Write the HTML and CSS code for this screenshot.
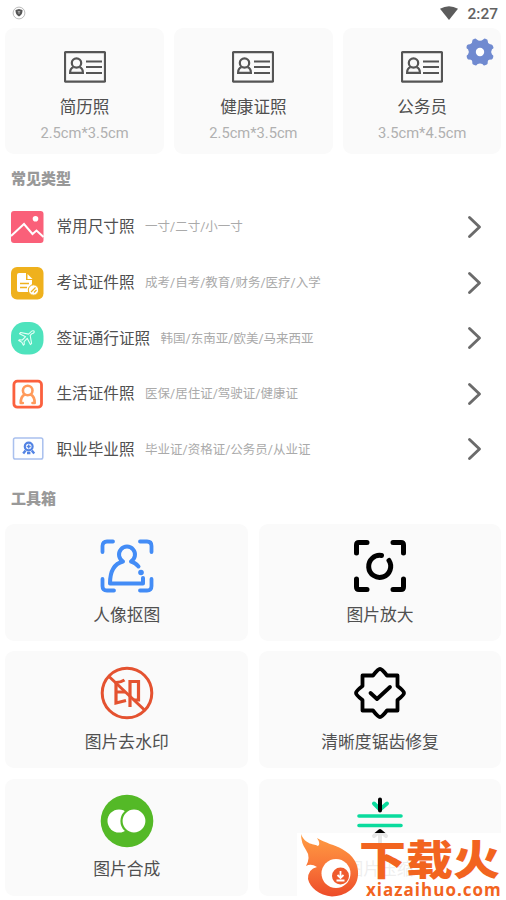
FILE: index.html
```
<!DOCTYPE html>
<html lang="zh-CN">
<head>
<meta charset="utf-8">
<title>证件照</title>
<link rel="stylesheet" href="styles.css">
</head>
<body>
<svg class="defs" width="0" height="0" aria-hidden="true">
  <symbol id="idcard" viewBox="0 0 42 32">
    <g fill="none" stroke="#555" stroke-width="2.200">
      <rect x="1" y="1.200" width="40" height="29.500" rx=".8"/>
      <circle cx="12.500" cy="12" r="4.700"/>
      <path d="M9.500 16.200c-2.600.6-3.400 2.800-3.400 5.600h12.800c0-2.800-.8-5-3.400-5.600"/>
      <path d="M22 10.500h16M22 16h16M22 22h16"/>
    </g>
  </symbol>
  <symbol id="chevron" viewBox="0 0 16 24">
    <path d="M2.500 2.500l10 9.500-10 9.500" fill="none" stroke="#6b6b6b" stroke-width="2.900" stroke-linecap="round" stroke-linejoin="round"/>
  </symbol>
</svg>
<div class="screen">
  <header class="status">
    <svg width="14" height="14" viewBox="0 0 14 14"><circle cx="7" cy="7" r="5.900" fill="#fff" stroke="#aaa" stroke-width=".8"/><path d="M7 3l3.500 1c0 3.400-.8 5-3.500 6.600C4.300 9 3.500 7.400 3.500 4z" fill="#555"/><path d="M7 5v3M5.700 5.700h2.600" stroke="#bbb" stroke-width=".8"/></svg>
    <div class="status-right">
      <svg width="18" height="14" viewBox="0 0 18 14"><path d="M0 2.700Q9-2.300 18 2.700L9 14z" fill="#5c5c5c"/></svg>
      <span class="clock">2:27</span>
    </div>
  </header>

  <main>
    <section class="sizes">
      <div class="card size"><svg width="42" height="32"><use href="#idcard"/></svg><b>简历照</b><small>2.5cm*3.5cm</small></div>
      <div class="card size"><svg width="42" height="32"><use href="#idcard"/></svg><b>健康证照</b><small>2.5cm*3.5cm</small></div>
      <div class="card size"><svg width="42" height="32"><use href="#idcard"/></svg><b>公务员</b><small>3.5cm*4.5cm</small>
        <svg class="gear" width="28" height="28" viewBox="-14 -14 28 28"><path fill="#708ad0" d="M-3.500-12.800Q-4.500-13.900-6-13Q-8-12.400-7.700-11Q-7.500-8.500-10-7.700Q-13.500-8-13.500-4.500Q-13.700-3.500-12-2.700Q-10.300 0-12 2.500Q-13.800 3.200-13.300 5Q-12.700 8-10.500 7.600Q-7.500 7.600-7.700 10.800Q-8 12.500-5 13.300Q-3.500 13.800-2.700 12.200Q0 10.600 2.700 12.200Q3.500 13.800 5 13.300Q8 12.500 7.700 10.800Q7.500 7.600 10.500 7.600Q12.700 8 13.300 5Q13.800 3.200 12 2.500Q10.300 0 12-2.700Q13.700-3.500 13.500-4.500Q12.500-8 10-7.700Q7.500-8.500 7.700-11Q8-12.400 6-13Q4.500-13.900 3.500-12.800Q0-9.600-3.500-12.800z"/><circle r="4.200" fill="#fff"/></svg>
      </div>
    </section>

    <h2 class="heading">常见类型</h2>
    <ul class="types">
      <li><svg width="34" height="34" viewBox="0 0 34 34"><rect x="1" y="1" width="32.500" height="32" rx="3" fill="#fa6079"/><circle cx="25.500" cy="8.700" r="2.800" fill="#fff"/><path d="M1 26L14 14l8.500 10 4-3.500L33.500 27" fill="none" stroke="#fff" stroke-width="2"/></svg><span>常用尺寸照</span><small>一寸/二寸/小一寸</small><svg class="go" width="16" height="24"><use href="#chevron"/></svg></li>
      <li><svg width="34" height="34" viewBox="0 0 34 34"><rect x="1" y="1" width="32.500" height="32.500" rx="6" fill="#efb11d"/><path d="M9 7h7v7h6v4l-4 8H9q-2 0-2-2V9q0-2 2-2z" fill="#fff"/><path d="M17.500 8l5 5h-5z" fill="#fff"/><path d="M10 17.500h9M10 21.500h7" stroke="#efb11d" stroke-width="1.500"/><circle cx="23.500" cy="24" r="5.200" fill="#fff" stroke="#efb11d" stroke-width="1"/><path d="M21 26l4.500-4.500M24 26.500l2.500-2.500" stroke="#efb11d" stroke-width="1.200"/></svg><span>考试证件照</span><small>成考/自考/教育/财务/医疗/入学</small><svg class="go" width="16" height="24"><use href="#chevron"/></svg></li>
      <li><svg width="34" height="34" viewBox="0 0 34 34"><rect x="1" y="1" width="32.500" height="32.500" rx="14" fill="#4ee3bd"/><path d="M24 10q-2-.8-3.500 1.300l-2 1.800-7.700-1.600-1.300 1.200 6.100 3-3.300 3.300-2.800-.3-.8.800 3.100 1.700 1.600 3 .9-.8-.2-2.800 3.200-3.200 3.100 6.200 1.200-1.300-1.400-7.800 1.700-1.800Q25 12 24 10z" fill="#4ee3bd" stroke="#e4fff5" stroke-width="1.100" stroke-linejoin="round"/></svg><span>签证通行证照</span><small>韩国/东南亚/欧美/马来西亚</small><svg class="go" width="16" height="24"><use href="#chevron"/></svg></li>
      <li><svg width="34" height="34" viewBox="0 0 34 34"><rect x="3.900" y="4.200" width="27.600" height="26" rx="3.500" fill="#fff" stroke="#fb603e" stroke-width="2.800"/><g fill="none" stroke="#ff9a5b" stroke-width="2.600" stroke-linecap="round"><circle cx="17.700" cy="13.500" r="4.800"/><path d="M14.700 17.500q-4 2-4 8.500M20.700 17.500q4 2 4 8.500M11.200 26h1.600M22.500 26h1.600"/></g></svg><span>生活证件照</span><small>医保/居住证/驾驶证/健康证</small><svg class="go" width="16" height="24"><use href="#chevron"/></svg></li>
      <li><svg width="34" height="34" viewBox="0 0 34 34"><rect x="3.500" y="6" width="29.300" height="21" rx="1.800" fill="#fdfeff" stroke="#a9c0ee" stroke-width="1.500"/><circle cx="18.700" cy="14.500" r="3.900" fill="none" stroke="#5283e4" stroke-width="2.200"/><path d="M18.700 12.500v4M16.700 14.500h4" stroke="#5283e4" stroke-width="1.500"/><path d="M15.600 18.500l-2.400 3M21.800 18.500l2.400 3M17 21h3.400" stroke="#5283e4" stroke-width="2.400"/></svg><span>职业毕业照</span><small>毕业证/资格证/公务员/从业证</small><svg class="go" width="16" height="24"><use href="#chevron"/></svg></li>
    </ul>

    <h2 class="heading tools-heading">工具箱</h2>
    <section class="tools">
      <div class="card tool"><svg width="54" height="54" viewBox="0 0 54 54"><g fill="none" stroke="#438cf6" stroke-width="3.800" stroke-linecap="round" stroke-linejoin="round"><path d="M2.500 13V7q0-4.500 4.500-4.500h6M40 2.500h7q4.500 0 4.500 4.500v6M2.500 40v7q0 4.500 4.500 4.500h7M40 51.500h7q4.500 0 4.500-4.500v-7"/><path d="M23 22.500a8 8 0 1 1 8 0q4 .8 7.500 5M23 22.500C13 25 10 33 10 44.500h33V39" stroke-width="4"/></g><circle cx="41" cy="33.500" r="2.800" fill="#438cf6"/></svg><span>人像抠图</span></div>
      <div class="card tool"><svg width="54" height="54" viewBox="0 0 54 54"><g fill="none" stroke="#000" stroke-width="5" stroke-linecap="round" stroke-linejoin="round"><path d="M3.500 14V6q0-2.500 2.500-2.500h8M40 3.500h8q2.500 0 2.500 2.500v8M3.500 40v8q0 2.500 2.500 2.500h8M40 50.500h8q2.500 0 2.500-2.500v-8"/><path d="M28.500 16.500a11 11 0 1 0 7.500 5"/></g></svg><span>图片放大</span></div>
      <div class="card tool"><svg width="54" height="54" viewBox="0 0 54 54"><g fill="none" stroke="#e45230" stroke-width="3"><circle cx="27" cy="27" r="24.800"/><path d="M9 10.500L44.500 44"/><path d="M24.500 14q-4 2.500-8.500 2.500V37l10-2.500M16 26h9M30 41V15.500h8.500V34H34" stroke-width="3.200"/></g></svg><span>图片去水印</span></div>
      <div class="card tool"><svg width="54" height="54" viewBox="0 0 54 54"><g fill="none" stroke="#000" stroke-width="3.800" stroke-linejoin="round" stroke-linecap="round"><path d="M27 3Q29 3 34 9.500H44.500V20Q51 25 51 27Q51 29 44.500 34V44.500H34Q29 51 27 51Q25 51 20 44.500H9.500V34Q3 29 3 27Q3 25 9.500 20V9.500H20Q25 3 27 3z"/><path d="M17.500 27l6.500 6 13-12"/></g></svg><span>清晰度锯齿修复</span></div>
      <div class="card tool"><svg width="54" height="54" viewBox="0 0 54 54"><circle cx="27" cy="27" r="26.300" fill="#54b927"/><circle cx="19" cy="27" r="11.500" fill="#fff"/><circle cx="34" cy="27" r="12.500" fill="#fff" stroke="#54b927" stroke-width="2.200"/></svg><span>图片合成</span></div>
      <div class="card tool"><svg width="54" height="54" viewBox="0 0 54 54"><g fill="none" stroke-linecap="round" stroke-linejoin="round" stroke-width="4"><path d="M21 9.500l6 6 7-6" stroke="#0adb9d"/><path d="M6 22h42M6 31.500h42" stroke="#0adb9d" stroke-width="3.600"/><path d="M27 5.500v11M27 50V38M21 42l6-5 6 5" stroke="#000"/></g></svg><span>图片压缩</span></div>
    </section>
  </main>

  <aside class="brand">
    <svg width="62" height="66" viewBox="0 0 62 66">
      <defs><linearGradient id="flame" x1="0" y1="0" x2="0" y2="1"><stop offset="0" stop-color="#ff9d43"/><stop offset=".5" stop-color="#f97839"/><stop offset="1" stop-color="#ed4c29"/></linearGradient></defs>
      <path d="M4 1C8 12 18 11 21 13Q24 11 20 5C28 10 38 12 45 16C56 22 62 31 61 42C60 56 48 63 35 63.500C22 62 13 55 11 46Q11 36 20 34Q14 30 9 33Q14 24 9 17Q4 10 4 1z" fill="url(#flame)"/>
      <circle cx="39" cy="40.500" r="14.500" fill="#fff"/><circle cx="43.500" cy="43" r="8.500" fill="#ef5b2d"/>
      <path d="M43.500 38v6M40.500 42l3 3 3-3M39.500 47.500h8" fill="none" stroke="#fff" stroke-width="1.800"/>
    </svg>
    <div class="brand-text"><strong>下载火</strong><em>xiazaihuo.com</em></div>
  </aside>
</div>
</body>
</html>
```
FILE: styles.css
```
* { box-sizing: border-box; }
body {
  margin: 0;
  background: #fff;
  color: #505050;
  font-family: Roboto, "Noto Sans CJK SC", sans-serif;
}
.defs { display: none; }
.screen {
  position: relative;
  width: 506px;
  height: 900px;
  overflow: hidden;
}
svg { display: block; flex: none; }
.status {
  display: flex;
  justify-content: space-between;
  align-items: center;
  height: 28px;
  padding: 0 8px 2px 12px;
}
.status-right { display: flex; align-items: center; gap: 8px; }
.status-right svg { margin-right: 1px; }
.clock { font-size: 15.500px; font-weight: 500; line-height: 20px; padding-top: 2px; color: #626262; }
.card { background: #fafafa; border-radius: 9px; }
.sizes {
  display: grid;
  grid-template-columns: repeat(3, 1fr);
  gap: 10.500px;
  padding: 0 4.600px 0 5.400px;
}
.size {
  position: relative;
  display: flex;
  flex-direction: column;
  align-items: center;
  height: 125.500px;
  padding-top: 23px;
}
.size b { margin-top: 13px; font-size: 16.600px; font-weight: 400; line-height: 24px; }
.size small { margin-top: 3px; font-size: 14.700px; line-height: 20px; color: #b0b0b0; }
.gear { position: absolute; right: 7px; top: 10px; }
.heading {
  margin: 15.400px 0 0 11px;
  font-size: 15px;
  font-weight: 900;
  line-height: 20px;
  color: #999;
}
.types { list-style: none; margin: 10.300px 0 0; padding: 0; }
.types li {
  display: flex;
  align-items: center;
  height: 55.600px;
  padding: 0 23px 0 10px;
}
.types span { margin-left: 12.500px; padding-top: 1px; font-size: 15.600px; line-height: 24px; }
.types small { margin-left: 10.500px; padding-top: 1px; font-size: 12.500px; line-height: 20px; color: #aaa; }
.go { margin-left: auto; }
.tools-heading { margin-top: 12px; }
.tools {
  display: grid;
  grid-template-columns: 1fr 1fr;
  gap: 10.500px;
  padding: 15px 4.600px 0 5.400px;
}
.tool {
  display: flex;
  flex-direction: column;
  align-items: center;
  height: 116.800px;
  padding-top: 15px;
}
.tool span { margin-top: 9.500px; font-size: 16.800px; line-height: 24px; }
.brand {
  position: absolute;
  left: 297px;
  top: 833px;
  display: flex;
  width: 209px;
  height: 64px;
  background: rgba(255, 255, 255, .9);
  color: #f2641f;
}
.brand-text { display: flex; flex-direction: column; align-items: flex-start; }
.brand strong {
  font-size: 47px;
  font-weight: 900;
  line-height: 48px;
  white-space: nowrap;
  transform: translateY(4px) scaleY(.88);
}
.brand em {
  margin: 0 0 0 7px;
  font: 700 17px/18px "Open Sans", sans-serif;
  letter-spacing: 1px;
}
```
